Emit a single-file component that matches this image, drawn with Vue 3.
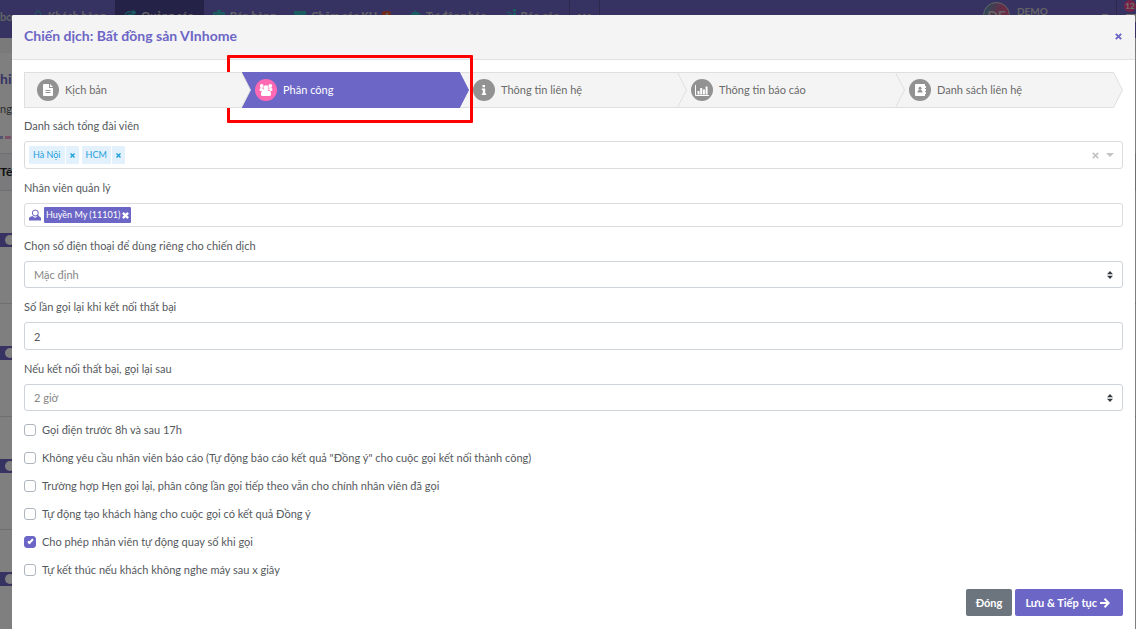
<script setup>
import { ref } from 'vue'

const steps = [
  { name: 'Kịch bản', icon: 'file' },
  { name: 'Phân công', icon: 'users', active: true },
  { name: 'Thông tin liên hệ', icon: 'info' },
  { name: 'Thông tin báo cáo', icon: 'chart' },
  { name: 'Danh sách liên hệ', icon: 'contact' },
]
const groups = ref(['Hà Nội', 'HCM'])
const managers = ref(['Huyền My (11101)'])
const phone = ref('Mặc định')
const retries = ref('2')
const delay = ref('2 giờ')
const options = ref([
  { text: 'Gọi điện trước 8h và sau 17h', on: false },
  { text: 'Không yêu cầu nhân viên báo cáo (Tự động báo cáo kết quả "Đồng ý" cho cuộc gọi kết nối thành công)', on: false },
  { text: 'Trường hợp Hẹn gọi lại, phân công lần gọi tiếp theo vẫn cho chính nhân viên đã gọi', on: false },
  { text: 'Tự động tạo khách hàng cho cuộc gọi có kết quả Đồng ý', on: false },
  { text: 'Cho phép nhân viên tự động quay số khi gọi', on: true },
  { text: 'Tự kết thúc nếu khách không nghe máy sau x giây', on: false },
])
</script>

<template>
  <div class="screen">
    <div class="page">
      <nav class="nav">
        <a href="#" class="nav-item inbox">box</a>
        <a href="#" class="nav-item customers">
          <svg width="10" height="12" viewBox="0 0 10 12"><path d="M2.5 5V3.5a2.5 2.5 0 0 1 5 0V5a2.5 2.5 0 0 1-5 0zM.5 11.5c0-3 2-4 4.500-4s4.500 1 4.500 4z" fill="none" stroke="#35b8c0" /></svg>
          <span>Khách hàng</span>
        </a>
        <a href="#" class="nav-item current">
          <svg width="12" height="14" viewBox="0 0 12 14"><g fill="none" stroke="#35b8c0" stroke-width="1.500"><circle cx="5.500" cy="7.500" r="4.700" /><circle cx="5.500" cy="7.500" r="2" /><path d="M5.500 7.500 11 2M9 1v3h3" /></g></svg>
          <span>Quảng cáo</span>
        </a>
        <a href="#" class="nav-item">
          <svg width="12" height="12" viewBox="0 0 12 12"><path d="M0 2h4V0h4v2h4v9H0z" fill="#35b8c0" /><path d="M3 4v5M9 4v5" stroke="#6c66c6" /></svg>
          <span>Bán hàng</span>
        </a>
        <a href="#" class="nav-item">
          <svg width="12" height="10" viewBox="0 0 12 10"><path d="M0 0h12v4H9l-3 2-3-2H0zM0 6h12v4H0z" fill="#35b8c0" /></svg>
          <span>Chăm sóc KH</span>
          <b class="count">4</b>
        </a>
        <a href="#" class="nav-item">
          <svg width="11" height="12" viewBox="0 0 11 12"><path d="M5 0h1v2h3v2h2v5H9v2H2V9H0V4h2V2h3z" fill="#35b8c0" /></svg>
          <span>Tự động báo</span>
        </a>
        <a href="#" class="nav-item">
          <svg width="10" height="14" viewBox="0 0 10 14"><path d="M7 0h3v3H7zM7 4h3v10H7zM3 5h3v9H3zM0 8h2v6H0zM1 3h4v1H1z" fill="#35b8c0" /></svg>
          <span>Báo cáo</span>
        </a>
        <a href="#" class="nav-item more" aria-label="Thêm"><i></i><i></i><i></i></a>
        <div class="account">
          <span class="avatar">DE</span>
          <span class="account-name">DEMO</span>
          <span class="caret"></span>
        </div>
        <div class="alerts">
          <svg width="12" height="12" viewBox="0 0 12 12"><path d="M0 2h12v8H0z" fill="#ddd" /></svg>
          <b>12</b>
        </div>
      </nav>
      <div class="strip"></div>
      <h1 class="page-title">hiế</h1>
      <p class="page-note">ng</p>
      <div class="dashes"><i></i><i></i></div>
      <div class="page-head">Tên</div>
      <div v-for="n in 4" :key="n" class="page-row"><span class="toggle"></span></div>
    </div>

    <div class="shade">
      <section class="modal" role="dialog" aria-labelledby="modal-title">
        <header class="modal-head">
          <h2 id="modal-title">Chiến dịch: Bất đồng sản VInhome</h2>
          <button type="button" class="plain close" aria-label="Đóng cửa sổ">
            <svg width="7" height="7" viewBox="0 0 7 7"><path d="M.8.8l5.400 5.400M6.200.8.8 6.200" stroke="#6c66c6" stroke-width="1.900" /></svg>
          </button>
        </header>

        <div class="modal-body">
          <ol class="steps">
            <li v-for="s in steps" :key="s.name" class="step" :class="{ active: s.active }">
              <a href="#" class="step-link">
                <span class="step-icon">
                  <svg v-if="s.icon === 'file'" width="10" height="12" viewBox="0 0 10 12"><path d="M0 1a1 1 0 0 1 1-1h5v4h4v7a1 1 0 0 1-1 1H1a1 1 0 0 1-1-1zM7 0l3 3H7z" fill="#fff" /><path d="M2.500 6.500h5M2.500 8.500h5" stroke="#929292" /></svg>
                  <svg v-else-if="s.icon === 'users'" width="14" height="12" viewBox="0 0 14 12"><g fill="#fff"><circle cx="2.700" cy="2" r="1.900" /><circle cx="11.300" cy="2" r="1.900" /><circle cx="7" cy="3.700" r="2.500" /><path d="M.7 6.500C0 3.500 2 3.500 4 4.500L5 7H2c-.7 0-1.100 0-1.300-.5zM13.300 6.500c.7-3-1.300-3-3.300-2L9 7h3c.7 0 1.100 0 1.300-.5zM2 10C2 7 3.500 5.500 5 5.500h4c1.500 0 3 1.500 3 4.500 0 1.500-.7 2-1.500 2h-7C2.700 12 2 11.500 2 10z" /></g></svg>
                  <svg v-else-if="s.icon === 'info'" width="6" height="10" viewBox="0 0 6 10"><path d="M1.500 0h2.500v2.200H1.500zM.8 3.500H4.200v5h1V10H.8V8.500h1V5h-1z" fill="#fff" /></svg>
                  <svg v-else-if="s.icon === 'chart'" width="14" height="11" viewBox="0 0 14 11"><path d="M.5 0v10.500H14" fill="none" stroke="#fff" /><path d="M2.500 6h2v3.500h-2zM5.200 3h2v6.500h-2zM7.900 4.500h2v5h-2zM10.600 1.500h2v8h-2z" fill="#fff" /></svg>
                  <svg v-else width="11" height="12" viewBox="0 0 11 12"><path d="M1 0h9v2h1v2h-1v1h1v2h-1v1h1v2h-1v2H1a1 1 0 0 1-1-1V1a1 1 0 0 1 1-1z" fill="#fff" /><circle cx="5" cy="4.200" r="1.500" fill="#929292" /><path d="M2.500 8.500C2.500 6.500 3.500 6 5 6s2.500.5 2.500 2.500z" fill="#929292" /></svg>
                </span>
                <span>{{ s.name }}</span>
              </a>
              <svg class="tip" viewBox="0 0 10 36"><path d="M0 0h.5l9 18-9 18H0z" class="tip-fill" /><path d="M.5.5l9 17.500-9 17.500" class="tip-line" /></svg>
              <span v-if="s.active" class="marker"></span>
            </li>
          </ol>

          <div class="field">
            <label for="groups">Danh sách tổng đài viên</label>
            <div class="control multi">
              <span v-for="g in groups" :key="g" class="tag">
                <span>{{ g }}</span>
                <button type="button" class="plain" :aria-label="'Xóa ' + g"><svg width="5" height="5" viewBox="0 0 5 5"><path d="M.5.5l4 4M4.500.5l-4 4" stroke="#1c9fdc" stroke-width="1.400" /></svg></button>
              </span>
              <input id="groups" class="ghost" type="text" />
              <button type="button" class="plain" aria-label="Xóa tất cả"><svg width="7" height="7" viewBox="0 0 7 7"><path d="M.8.8l5.400 5.400M6.200.8.8 6.200" stroke="#c4c4c4" stroke-width="1.700" /></svg></button>
              <button type="button" class="plain open" aria-label="Mở danh sách"><svg width="8" height="4" viewBox="0 0 8 4"><path d="M0 0h8L4 4z" fill="#c4c4c4" /></svg></button>
            </div>
          </div>

          <div class="field">
            <label for="managers">Nhân viên quản lý</label>
            <div class="control people">
              <svg width="12" height="12" viewBox="0 0 12 12"><circle cx="6.300" cy="4" r="3" fill="none" stroke="#6c66c6" /><path d="M8 6l2 2" stroke="#6c66c6" stroke-width="1.500" /><path d="M0 11.500V9.500C0 8 1.500 7.500 3.500 7l2.500 2 2.500-2c2 .5 3.500 1 3.500 2.500v2z" fill="#6c66c6" /></svg>
              <span v-for="m in managers" :key="m" class="person">
                <span>{{ m }}</span>
                <button type="button" class="plain" :aria-label="'Xóa ' + m"><svg width="7" height="7" viewBox="0 0 7 7"><path d="M.9.9l5.200 5.200M6.100.9.9 6.100" stroke="#fff" stroke-width="2.400" /></svg></button>
              </span>
              <input id="managers" class="ghost" type="text" />
            </div>
          </div>

          <div class="field">
            <label for="phone">Chọn số điện thoại để dùng riêng cho chiến dịch</label>
            <div class="select">
              <select id="phone" v-model="phone"><option>Mặc định</option></select>
              <svg width="6" height="8" viewBox="0 0 6 8"><path d="M0 3.300 3 0l3 3.300zM0 4.700 3 8l3-3.300z" fill="#343a40" /></svg>
            </div>
          </div>

          <div class="field">
            <label for="retries">Số lần gọi lại khi kết nối thất bại</label>
            <input id="retries" v-model="retries" class="control text" type="text" />
          </div>

          <div class="field">
            <label for="delay">Nếu kết nối thất bại, gọi lại sau</label>
            <div class="select">
              <select id="delay" v-model="delay"><option>2 giờ</option></select>
              <svg width="6" height="8" viewBox="0 0 6 8"><path d="M0 3.300 3 0l3 3.300zM0 4.700 3 8l3-3.300z" fill="#343a40" /></svg>
            </div>
          </div>

          <label v-for="o in options" :key="o.text" class="check">
            <input v-model="o.on" type="checkbox" />
            <span>{{ o.text }}</span>
          </label>

          <footer class="actions">
            <button type="button" class="btn grey">Đóng</button>
            <button type="button" class="btn violet">
              <span>Lưu &amp; Tiếp tục</span>
              <svg width="10" height="10" viewBox="0 0 10 10"><path d="M0 5h8.500M4.500.8 8.700 5 4.500 9.200" fill="none" stroke="#fff" stroke-width="2" /></svg>
            </button>
          </footer>
        </div>
      </section>
    </div>
  </div>
</template>

<style>
body {
  margin: 0;
}
</style>

<style scoped>
.screen,
.screen * {
  box-sizing: border-box;
}
.screen {
  position: relative;
  min-height: 100vh;
  overflow: hidden;
  font-family: Lato, 'Noto Sans', sans-serif;
  font-size: 11px;
  line-height: 18px;
  color: #55595d;
}
.screen svg {
  display: block;
  flex: none;
}
.screen input,
.screen select,
.screen button {
  font: inherit;
}
.screen input,
.screen button {
  color: inherit;
}
.plain {
  display: flex;
  align-items: center;
  padding: 0;
  border: 0;
  background: none;
  cursor: pointer;
}

/* page underneath */
.page {
  position: absolute;
  inset: 0;
  overflow: hidden;
  background: #fff;
}
.nav {
  display: flex;
  height: 38px;
  background: #6c66c6;
  color: #c9c9c9;
  font-weight: 700;
}
.nav-item {
  display: flex;
  align-items: center;
  gap: 5px;
  padding: 0 10px 6px 9px;
  color: inherit;
  text-decoration: none;
  white-space: nowrap;
}
.nav-item.inbox {
  width: 24px;
  padding: 0 0 4px;
}
.nav-item.customers {
  padding-right: 10px;
}
.current {
  background: #4a4490;
}
.count {
  padding: 0 2px;
  border-radius: 2px;
  background: #e0533a;
  font-size: 8px;
  line-height: 11px;
}
.nav-item.more {
  gap: 2px;
  padding: 0 8px 8px;
  border-left: 1px solid #58529f;
  border-right: 1px solid #58529f;
}
.more i {
  width: 3px;
  height: 3px;
  border-radius: 1px;
  background: #c9c9c9;
}
.account {
  display: flex;
  align-items: flex-start;
  gap: 7px;
  width: 134px;
  margin-left: auto;
  padding-top: 2px;
  border-right: 1px solid #58529f;
}
.avatar {
  width: 27px;
  height: 27px;
  border: 1px solid #ccc;
  border-radius: 50%;
  background: linear-gradient(110deg, #3d9db8, #d4578f 60%);
  font-size: 14px;
  line-height: 25px;
  text-align: center;
}
.account-name {
  font-size: 10px;
}
.caret {
  width: 6px;
  height: 2px;
  margin: 12px 8px 0 auto;
  background: #c9c9c9;
}
.alerts {
  position: relative;
  width: 19px;
  padding: 12px 0 0 9px;
}
.alerts b {
  position: absolute;
  top: 0;
  left: 7px;
  width: 12px;
  height: 12px;
  border-radius: 50%;
  background: #f0418b;
  color: #ddd;
  font-size: 8px;
  line-height: 12px;
  text-align: center;
}
.strip {
  height: 15px;
  background: #f4f4f4;
}
.page-title {
  margin: 17px 0 12px;
  color: #6c66c6;
  font-size: 14px;
  font-weight: 700;
  line-height: 18px;
}
.page-note {
  margin: 0;
}
.dashes {
  display: flex;
  gap: 2px;
  height: 3px;
  margin: 18px 0 14px -3px;
}
.dashes i {
  width: 6px;
  background: #aaa5e5;
}
.dashes i + i {
  background: #f3a0c8;
}
.page-head {
  height: 38px;
  border: 1px solid #ddd;
  border-left: 0;
  background: #f4f5fa;
  color: #222;
  font-size: 12px;
  font-weight: 700;
  line-height: 36px;
}
.page-row {
  display: flex;
  align-items: center;
  height: 113px;
  padding-bottom: 14px;
  border-bottom: 1px solid #ddd;
}
.toggle {
  display: flex;
  width: 20px;
  height: 14px;
  padding: 2px 0 0 5px;
  background: #6c66c6;
}
.toggle::after {
  width: 10px;
  height: 10px;
  border-radius: 50%;
  background: #fff;
  content: '';
}

/* dialog */
.shade {
  position: relative;
  min-height: 100vh;
  padding: 15px 1px 0 12px;
  background: rgba(0, 0, 0, 0.5);
}
.modal {
  min-height: calc(100vh - 15px);
  border-radius: 2px 2px 0 0;
  background: #fff;
}
.modal-head {
  display: flex;
  align-items: center;
  justify-content: space-between;
  height: 45px;
  padding: 0 13px 2px 12px;
  border-bottom: 1px solid #e2e2e2;
  border-radius: 2px 2px 0 0;
  background: #f4f4f4;
}
.modal-head h2 {
  margin: 0;
  color: #6c66c6;
  font-size: 14px;
  font-weight: 700;
}
.modal-body {
  padding: 12px;
}
.steps {
  display: flex;
  margin: 0 0 9px;
  padding: 0 9px 0 0;
  list-style: none;
}
.step {
  position: relative;
  flex: none;
  width: 20%;
  height: 36px;
  border: solid #dfdfdf;
  border-width: 1px 0;
  background: #f4f4f4;
}
.step:first-child {
  z-index: 4;
  border-left-width: 1px;
}
.step.active {
  z-index: 3;
  border-color: #6c66c6;
  background: #6c66c6;
}
.step-link {
  display: flex;
  align-items: center;
  gap: 6px;
  height: 100%;
  padding-left: 13px;
  color: #6b6b6b;
  text-decoration: none;
}
.step:first-child .step-link {
  padding-left: 12px;
}
.step-icon {
  display: flex;
  align-items: center;
  justify-content: center;
  width: 22px;
  height: 22px;
  border-radius: 50%;
  background: #929292;
}
.tip {
  position: absolute;
  top: -1px;
  right: -9px;
  z-index: 1;
  width: 10px;
  height: 36px;
}
.tip-fill {
  fill: #f4f4f4;
}
.tip-line {
  fill: none;
  stroke: #dfdfdf;
}
.active .step-link {
  color: #fff;
}
.active .step-icon {
  background: #ff69b4;
}
.active .tip-fill {
  fill: #6c66c6;
}
.active .tip-line {
  stroke: #6c66c6;
}
.marker {
  position: absolute;
  inset: -18px -13px -16px -15px;
  z-index: 2;
  border: 3px solid #f00;
  border-radius: 1px;
  pointer-events: none;
}
.field {
  display: flex;
  flex-direction: column;
  gap: 6px;
  margin-bottom: 10px;
}
.control {
  display: flex;
  align-items: center;
  width: 100%;
  height: 28px;
  border: 1px solid #dcdcdc;
  border-radius: 3px;
  background: #fff;
}
.multi {
  gap: 3px;
  padding: 0 8px 0 4px;
}
.tag {
  display: flex;
  height: 18px;
  border-radius: 1px;
  background: #e3f1fc;
  color: #1c9fdc;
  font-size: 9px;
}
.tag span {
  padding: 0 4px;
  border-right: 1px solid #fff;
}
.tag .plain {
  padding: 0 4px;
}
.ghost {
  flex: 1;
  min-width: 0;
  border: 0;
  outline: 0;
  background: none;
}
.multi .open {
  margin-left: 4px;
}
.people {
  gap: 3px;
  height: 24px;
  padding: 0 4px;
}
.person {
  display: flex;
  align-items: center;
  gap: 2px;
  height: 16px;
  padding: 0 2px;
  border-radius: 1px;
  background: #6c66c6;
  color: #fff;
  font-size: 9px;
  line-height: 16px;
}
.select {
  position: relative;
  height: 27px;
}
.select select {
  appearance: none;
  width: 100%;
  height: 100%;
  padding: 0 9px;
  border: 1px solid #ced4da;
  border-radius: 3px;
  background: #fff;
  color: #868686;
}
.select svg {
  position: absolute;
  top: 10px;
  right: 10px;
  pointer-events: none;
}
.text {
  padding: 0 9px;
  border-color: #ced4da;
}
.check {
  display: flex;
  align-items: center;
  gap: 6px;
  margin-bottom: 10px;
}
.check input {
  appearance: none;
  display: flex;
  justify-content: center;
  width: 12px;
  height: 12px;
  margin: 0;
  border: 1px solid #adb5bd;
  border-radius: 3px;
  background: #fff;
}
.check input:checked {
  border-color: #6c66c6;
  background: #6c66c6;
}
.check input:checked::after {
  width: 1px;
  height: 4px;
  margin-top: 1px;
  border: solid #fff;
  border-width: 0 2px 2px 0;
  transform: rotate(45deg);
  content: '';
}
.actions {
  display: flex;
  justify-content: flex-end;
  gap: 3px;
}
.screen .btn {
  display: flex;
  align-items: center;
  gap: 3px;
  height: 27px;
  padding: 0 10px;
  border: 0;
  border-radius: 2px;
  color: #fff;
  font-weight: 700;
}
.btn.grey {
  background: #6c757d;
}
.btn.violet {
  padding-right: 13px;
  background: #6c66c6;
}
</style>
